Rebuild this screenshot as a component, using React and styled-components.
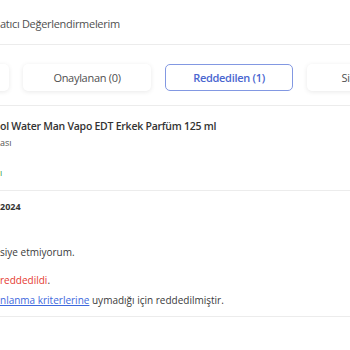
import React from 'react';
import styled, { createGlobalStyle } from 'styled-components';

const GlobalStyle = createGlobalStyle`
  html, body {
    margin: 0;
    padding: 0;
    background: #ffffff;
  }
  body {
    font-family: "Open Sans", "Noto Sans", Arial, sans-serif;
    color: #333333;
    overflow: hidden;
  }
`;

const Page = styled.div`
  width: 350px;
  height: 350px;
  overflow: hidden;
  background: #fff;
`;

const Header = styled.div`
  height: 45px;
  box-sizing: border-box;
  padding-top: 16px;
  font-size: 11px;
  letter-spacing: -0.3px;
  color: #4f4f4f;
  border-bottom: 1px solid #ececec;
`;

const TabBar = styled.div`
  display: flex;
  gap: 14px;
  margin-left: -119px;
  padding: 19px 0 14px;
  border-bottom: 1px solid #ececec;
`;

const Tab = styled.div`
  flex: 0 0 128px;
  height: 27px;
  box-sizing: border-box;
  display: flex;
  align-items: center;
  justify-content: center;
  border-radius: 5px;
  font-size: 11px;
  letter-spacing: -0.3px;
  font-weight: ${p => (p.$active ? 600 : 400)};
  color: ${p => (p.$active ? '#4a66d0' : '#4f4f4f')};
  background: #fff;
  border: 1px solid ${p => (p.$active ? '#8298e2' : 'transparent')};
  box-shadow: ${p => (p.$active ? 'none' : '0 1px 5px rgba(0, 0, 0, 0.09)')};
  white-space: nowrap;
  overflow: hidden;
`;

const Product = styled.div`
  height: 85px;
  box-sizing: border-box;
  padding-top: 13px;
  border-bottom: 1px solid #ececec;
`;

const Title = styled.div`
  font-size: 10.5px;
  font-weight: 600;
  letter-spacing: -0.25px;
  color: #333;
  white-space: nowrap;
`;

const Sub = styled.div`
  font-size: 9px;
  color: #555;
  margin-top: 3px;
`;

const Status = styled.div`
  font-size: 9px;
  color: #3fa34d;
  margin-top: 17px;
`;

const Body = styled.div`
  height: 126px;
  box-sizing: border-box;
  padding-top: 9px;
  border-bottom: 1px solid #ececec;
`;

const DateText = styled.div`
  font-size: 9px;
  font-weight: 700;
  color: #333;
`;

const Comment = styled.div`
  font-size: 10px;
  color: #3a3a3a;
  margin-top: 32px;
`;

const Notice = styled.div`
  font-size: 10px;
  color: #3a3a3a;
  margin-top: ${p => p.$gap || 0}px;
  line-height: 20px;
  white-space: nowrap;
`;

const Red = styled.span`
  color: #e53a2f;
`;

const Link = styled.a`
  color: #3d68dd;
  text-decoration: underline;
`;

export default function App() {
  return (
    <Page>
      <GlobalStyle />
      <Header>atıcı Değerlendirmelerim</Header>
      <TabBar>
        <Tab>Tümü (1)</Tab>
        <Tab>Onaylanan (0)</Tab>
        <Tab $active>Reddedilen (1)</Tab>
        <Tab>Silinenler (0)</Tab>
      </TabBar>
      <Product>
        <Title>ol Water Man Vapo EDT Erkek Parfüm 125 ml</Title>
        <Sub>ası</Sub>
        <Status>ı</Status>
      </Product>
      <Body>
        <DateText>2024</DateText>
        <Comment>siye etmiyorum.</Comment>
        <Notice $gap={11}>
          <Red>reddedildi</Red>.
        </Notice>
        <Notice>
          <Link>nlanma kriterlerine</Link> uymadığı için reddedilmiştir.
        </Notice>
      </Body>
    </Page>
  );
}
